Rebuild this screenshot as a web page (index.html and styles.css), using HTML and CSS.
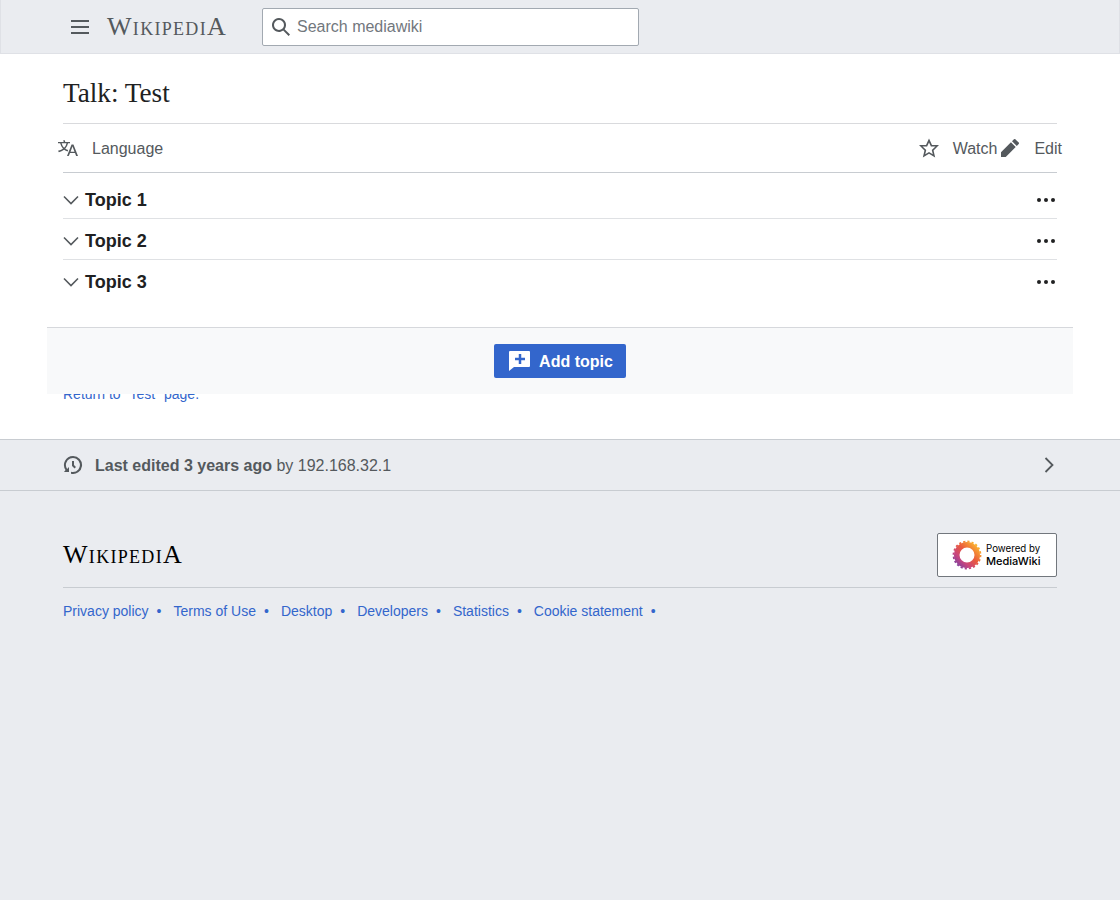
FILE: index.html
```html
<!DOCTYPE html>
<html lang="en">
<head>
<meta charset="utf-8">
<title>Talk: Test</title>
<link rel="stylesheet" href="styles.css">
</head>
<body>
<header class="topbar">
  <button class="menu" aria-label="Menu"><svg width="20" height="20" viewBox="0 0 20 20"><path d="M1 3v2h18V3zm0 6v2h18V9zm0 6v2h18v-2z" fill="#54595d"/></svg></button>
  <a class="wordmark top-mark">WikipediA</a>
  <div class="search">
    <svg class="search-icon" width="20" height="20" viewBox="0 0 20 20"><path d="M12.2 13.6a7 7 0 1 1 1.4-1.4l5.4 5.4-1.4 1.4zM3 8a5 5 0 1 0 10 0A5 5 0 0 0 3 8" fill="#54595d"/></svg>
    <span class="placeholder">Search mediawiki</span>
  </div>
</header>

<main class="page">
  <h1 class="title">Talk: Test</h1>
  <nav class="toolbar">
    <a class="tool tool-lang">
      <svg width="20" height="20" viewBox="0 0 20 20"><path d="M20 18h-1.44a.6.6 0 0 1-.4-.12.8.8 0 0 1-.23-.31L17 15h-5l-1 2.54a.8.8 0 0 1-.22.3.6.6 0 0 1-.4.14H9l4.55-11.47h1.89zm-3.53-4.31L14.89 9.5a12 12 0 0 1-.39-1.24q-.09.37-.19.69l-.19.56-1.58 4.19zm-6.3-1.58a13.4 13.4 0 0 1-2.91-1.41 11.46 11.46 0 0 0 2.81-5.37H12V4H7.31a4 4 0 0 0-.2-.56C6.87 2.79 6.6 2 6.6 2l-1.47.5s.4.89.6 1.5H0v1.33h2.15A11.23 11.23 0 0 0 5 10.7a17.2 17.2 0 0 1-5 2.1q.56.82.87 1.38a23.3 23.3 0 0 0 5.22-2.51 15.6 15.6 0 0 0 3.56 1.77zM3.63 5.33h4.91a8.1 8.1 0 0 1-2.45 4.45 9.1 9.1 0 0 1-2.46-4.45" fill="#54595d"/></svg>
      <span>Language</span>
    </a>
    <a class="tool tool-watch">
      <svg width="20" height="20" viewBox="0 0 20 20"><path d="M20 7h-7L10 .5 7 7H0l5.46 5.47-1.64 7 6.18-3.7 6.18 3.73-1.63-7zm-10 6.9-3.76 2.27 1-4.28L3.5 8.5h4.61L10 4.6l1.9 3.9h4.6l-3.73 3.4 1 4.28z" fill="#54595d"/></svg>
      <span>Watch</span>
    </a>
    <a class="tool tool-edit">
      <svg width="20" height="20" viewBox="0 0 20 20"><path d="m16.77 8 1.94-2a1 1 0 0 0 0-1.41l-3.34-3.3a1 1 0 0 0-1.41 0L12 3.23zM1 14.25V19h4.75l9.96-9.96-4.75-4.75z" fill="#54595d"/></svg>
      <span>Edit</span>
    </a>
  </nav>

  <section class="topics">
    <div class="topic">
      <svg class="chev" width="16" height="10" viewBox="0 0 16 10"><path d="M1 1.500l7 7 7-7" fill="none" stroke="#54595d" stroke-width="1.600"/></svg>
      <h2 class="topic-name">Topic 1</h2>
      <span class="dots"><i></i><i></i><i></i></span>
    </div>
    <div class="topic">
      <svg class="chev" width="16" height="10" viewBox="0 0 16 10"><path d="M1 1.500l7 7 7-7" fill="none" stroke="#54595d" stroke-width="1.600"/></svg>
      <h2 class="topic-name">Topic 2</h2>
      <span class="dots"><i></i><i></i><i></i></span>
    </div>
    <div class="topic topic-last">
      <svg class="chev" width="16" height="10" viewBox="0 0 16 10"><path d="M1 1.500l7 7 7-7" fill="none" stroke="#54595d" stroke-width="1.600"/></svg>
      <h2 class="topic-name">Topic 3</h2>
      <span class="dots"><i></i><i></i><i></i></span>
    </div>
  </section>

  <p class="return"><a>Return to "Test" page.</a></p>

  <div class="add-bar">
    <button class="add-btn">
      <svg width="24" height="24" viewBox="0 0 24 24"><path fill-rule="evenodd" d="M3 2h19a1 1 0 0 1 1 1v14a1 1 0 0 1-1 1H7l-5 4V3a1 1 0 0 1 1-1zM11.750 5v3.750H8v2.500h3.750V15h2.500v-3.750H18v-2.500h-3.750V5z" fill="#fff"/></svg>
      <span>Add topic</span>
    </button>
  </div>
</main>

<a class="last-edited">
  <svg width="20" height="20" viewBox="0 0 20 20"><path d="M9 6v5h.06l2.480 2.470 1.410-1.410L11 10.080V6z" fill="#54595d"/><path d="M10 1a9 9 0 0 0-7.460 14.050L1 17h5v-5l-1.900 1.900A7 7 0 1 1 10 17a6.900 6.900 0 0 1-2-.3v2.060A9 9 0 1 0 10 1" fill="#54595d"/></svg>
  <span class="edited-text"><strong>Last edited 3 years ago</strong> by 192.168.32.1</span>
  <svg class="edited-arrow" width="10" height="16" viewBox="0 0 10 16"><path d="M1.500 1l7 7-7 7" fill="none" stroke="#54595d" stroke-width="1.800"/></svg>
</a>

<footer class="foot">
  <div class="foot-head">
    <a class="wordmark foot-mark">WikipediA</a>
    <a class="powered">
      <svg width="30" height="30" viewBox="0 0 30 30">
        <defs><linearGradient id="sun" gradientUnits="userSpaceOnUse" x1="26" y1="4" x2="5" y2="26"><stop offset="0" stop-color="#fdc02c"/><stop offset=".45" stop-color="#ea5a3c"/><stop offset=".75" stop-color="#c8457e"/><stop offset="1" stop-color="#7d3f9e"/></linearGradient></defs>
        <circle cx="15" cy="15" r="10.250" fill="none" stroke="url(#sun)" stroke-width="5.500"/>
        <circle cx="15" cy="15" r="13.500" fill="none" stroke="url(#sun)" stroke-width="1.800" stroke-dasharray="2.200 2.040"/>
      </svg>
      <span class="powered-text"><span class="pw-top">Powered by</span><span class="pw-bot">MediaWiki</span></span>
    </a>
  </div>
  <ul class="foot-links">
    <li><a>Privacy policy</a></li>
    <li><a>Terms of Use</a></li>
    <li><a>Desktop</a></li>
    <li><a>Developers</a></li>
    <li><a>Statistics</a></li>
    <li><a>Cookie statement</a></li>
  </ul>
</footer>
</body>
</html>
```
FILE: styles.css
```css
* { box-sizing: border-box; }
html, body { margin: 0; padding: 0; }
body {
  background: #eaecf0;
  color: #202122;
  font-family: "Liberation Sans", Arial, sans-serif;
  font-size: 16px;
  min-height: 900px;
}
a { color: #3366cc; text-decoration: none; }

.topbar {
  height: 54px;
  display: flex;
  align-items: center;
  padding-left: 70px;
  background: #eaecf0;
  border: 1px solid #dfe1e6;
  border-top: 0;
}
.menu {
  width: 20px;
  height: 20px;
  padding: 0;
  margin-left: -1px;
  border: 0;
  background: none;
  display: block;
}
.menu svg { display: block; }
.wordmark {
  font-family: "Liberation Serif", "Times New Roman", serif;
  font-variant: small-caps;
  white-space: nowrap;
  line-height: 1;
  font-size: 26px;
  letter-spacing: 1.300px;
}
.top-mark {
  margin-left: 17px;
  color: #54595d;
  width: 155px;
}
.search {
  width: 377px;
  height: 38px;
  display: flex;
  align-items: center;
  gap: 6px;
  padding-left: 8px;
  background: #fff;
  border: 1px solid #a2a9b1;
  border-radius: 2px;
}
.search-icon { display: block; }
.placeholder { color: #72777d; font-size: 16px; padding-top: 1px; }

.page {
  position: relative;
  background: #fff;
  height: 385px;
  padding: 0 63px;
}
.title {
  margin: 0;
  height: 70px;
  display: flex;
  align-items: center;
  padding-top: 9px;
  border-bottom: 1px solid #d9dadd;
  font-family: "Liberation Serif", "Times New Roman", serif;
  font-weight: 400;
  font-size: 27.2px;
  color: #202122;
}
.toolbar {
  height: 49px;
  display: flex;
  align-items: center;
  border-bottom: 1px solid #c8ccd1;
  margin: 0;
}
.tool {
  display: flex;
  align-items: center;
  color: #54595d;
  font-size: 16px;
}
.tool svg { display: block; margin-right: 14px; }
.tool span { padding-top: 1px; }
.tool-lang { margin-left: -5px; margin-right: auto; }
.tool-watch { margin-right: 3px; }
.tool-edit { margin-right: -5px; }

.topics { padding-top: 5px; }
.topic {
  height: 41px;
  display: flex;
  align-items: center;
  padding-top: 4px;
  border-bottom: 1px solid #dfe1e4;
}
.topic-last { border-bottom-color: transparent; }
.chev { display: block; margin-right: 6px; }
.topic-name {
  margin: 0;
  flex: 1;
  font-size: 18px;
  font-weight: 700;
  color: #202122;
}
.dots { display: flex; gap: 3px; margin-right: 2px; }
.dots i {
  display: block;
  width: 4px;
  height: 4px;
  border-radius: 50%;
  background: #202122;
}
.return { margin: 0; padding-top: 83px; font-size: 14px; line-height: 20px; }

.add-bar {
  position: absolute;
  left: 47px;
  right: 47px;
  top: 273px;
  height: 67px;
  display: flex;
  align-items: center;
  justify-content: center;
  background: #f8f9fa;
  border-top: 1px solid #d6d8dc;
}
.add-btn {
  width: 132px;
  height: 34px;
  display: flex;
  align-items: center;
  justify-content: center;
  gap: 8px;
  padding: 0;
  border: 0;
  border-radius: 2px;
  background: #3366cc;
  color: #fff;
  font: 700 16px "Liberation Sans", Arial, sans-serif;
}
.add-btn svg { display: block; }
.add-btn span { padding-top: 1px; }

.last-edited {
  height: 52px;
  display: flex;
  align-items: center;
  padding: 0 63px;
  background: #eaecf0;
  border-top: 1px solid #c8ccd1;
  border-bottom: 1px solid #c8ccd1;
  color: #54595d;
  font-size: 16px;
}
.edited-text { flex: 1; margin-left: 12px; padding-top: 1px; }
.edited-arrow { display: block; margin-right: 3px; }

.foot { padding: 42px 63px 0; }
.foot-head {
  height: 55px;
  display: flex;
  justify-content: space-between;
  border-bottom: 1px solid #c8ccd1;
}
.foot-mark { color: #000; padding-top: 9px; }
.powered {
  width: 120px;
  height: 44px;
  display: flex;
  align-items: center;
  gap: 4px;
  padding-left: 14px;
  background: #fff;
  border: 1px solid #72777d;
  border-radius: 2px;
  color: #000;
}
.powered svg { display: block; }
.powered-text { display: flex; flex-direction: column; font-family: Inter, sans-serif; line-height: 12px; }
.pw-top { font-size: 9.700px; }
.pw-bot { font-size: 11px; font-weight: 500; }
.foot-links {
  list-style: none;
  margin: 0;
  padding: 13px 0 0;
  display: flex;
  font-size: 14px;
  line-height: 20px;
}
.foot-links li { display: flex; }
.foot-links li::after {
  content: "•";
  color: #3366cc;
  margin: 0 12px 0 8px;
}
```
